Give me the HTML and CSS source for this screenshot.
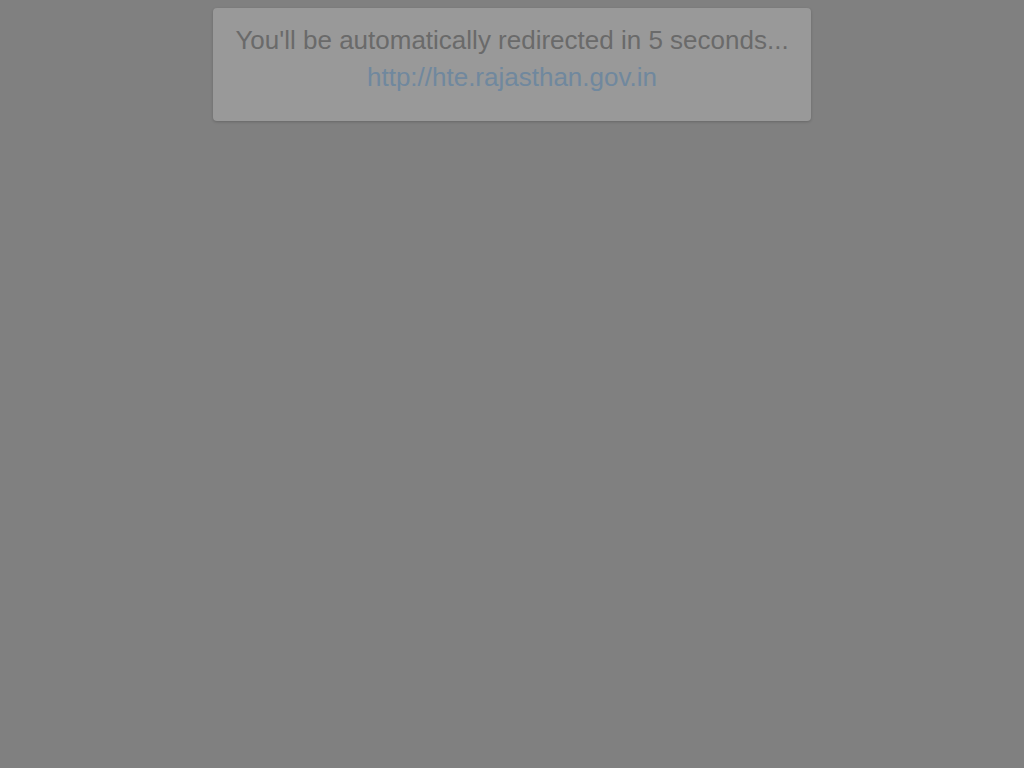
FILE: index.html
```html
<!DOCTYPE html>
<html>
<head>
<meta charset="utf-8">
<link rel="stylesheet" href="styles.css">
</head>
<body>
<div class="page">
  <div class="notice">
    <p class="msg">You'll be automatically redirected in 5 seconds...</p>
    <a class="link" href="#">http://hte.rajasthan.gov.in</a>
  </div>
</div>
</body>
</html>
```
FILE: styles.css
```css
html, body {
  margin: 0;
  padding: 0;
  height: 100%;
  background: #808080;
}
.page {
  display: flex;
  justify-content: center;
  padding-top: 8px;
  font-family: "Liberation Sans", Arial, sans-serif;
}
.notice {
  width: 598px;
  height: 113px;
  box-sizing: border-box;
  background: #999999;
  border-radius: 4px;
  box-shadow: 0 1px 3px rgba(0,0,0,0.2);
  display: flex;
  flex-direction: column;
  align-items: center;
  padding-top: 14px;
  text-align: center;
}
.msg {
  margin: 0;
  font-size: 26px;
  line-height: 37px;
  color: #6a6a6a;
}
.link {
  font-size: 26px;
  line-height: 37px;
  color: #70889e;
  text-decoration: none;
}
```
